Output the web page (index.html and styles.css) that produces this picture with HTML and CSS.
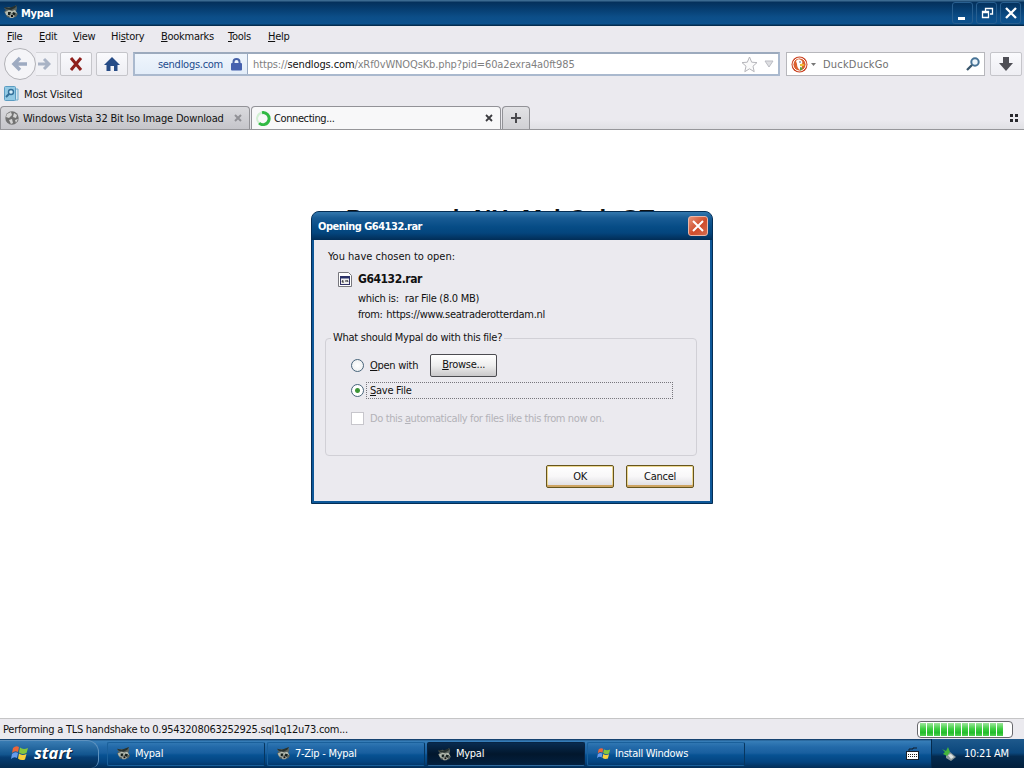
FILE: index.html
```html
<!DOCTYPE html>
<html lang="en">

<head>
    <meta charset="UTF-8">
    <meta name="viewport" content="width=device-width, initial-scale=1.0">
    <title>Mypal</title>
    <link rel="stylesheet" href="styles.css">
</head>

<body>
    <!-- shared icons -->
    <svg class="defs" width="0" height="0">
        <symbol id="mypal" viewBox="0 0 16 16">
            <path d="M1 4L6 3L9 4L13 1L14 4L13 8L15 10L13 13L8 14L4 13L3 10L1 8L3 6Z" fill="#59615c" />
            <path d="M1 3L6 4L9 3L14 1L12 4L8 6L3 5Z" fill="#26312f" />
            <path d="M2 8L6 6L9 7L12 6L14 9L11 11L9 9L6 12L3 11Z" fill="#b4bbb0" />
            <path d="M5 8h3l-1 3H5zM10 8l3 1l-2 3l-2-1z" fill="#15201e" />
            <path d="M6 12l3-2l3 2l-2 2H7z" fill="#a7aca3" />
            <path d="M8 11h2v2H8z" fill="#111" />
        </symbol>
        <symbol id="flag" viewBox="0 0 18 18">
            <path d="M2 4Q5 1 8 3L7 8Q4 6 1 9Z" fill="#ed6639" />
            <path d="M9 3.5Q12 6 17 4L15.500 9Q11 11 8 8.5Z" fill="#86c63f" />
            <path d="M1 10Q4 7 7 9L6 14Q3 12 0 15Z" fill="#679bec" />
            <path d="M8 9.5Q11 12 15.500 10L14 15.500Q10 17 7 14.500Z" fill="#f9cf3c" />
        </symbol>
    </svg>

    <div class="titlebar">
        <svg class="app-icon" width="16" height="16"><use href="#mypal" /></svg>
        <span class="title">Mypal</span>
        <div class="win-buttons">
            <span class="win-btn"><svg width="20" height="20"><path d="M5 14h7v3H5z" fill="#fff" /></svg></span>
            <span class="win-btn"><svg width="20" height="20"><path d="M8.500 8V5.500h7V11H13M5.500 8.500h6v6h-6zM5.500 9.500h6" fill="none" stroke="#fff" stroke-width="1.300" /></svg></span>
            <span class="win-btn"><svg width="20" height="20"><path d="M5 5L15 15M15 5L5 15" stroke="#fff" stroke-width="2.300" /></svg></span>
        </div>
    </div>

    <div class="menubar">
        <span class="m-file"><u>F</u>ile</span>
        <span class="m-edit"><u>E</u>dit</span>
        <span class="m-view"><u>V</u>iew</span>
        <span class="m-history">Hi<u>s</u>tory</span>
        <span class="m-bookmarks"><u>B</u>ookmarks</span>
        <span class="m-tools"><u>T</u>ools</span>
        <span><u>H</u>elp</span>
    </div>

    <div class="navbar">
        <div class="back"><svg width="18" height="16"><path d="M9 2L3 8L9 14M4 8H16" fill="none" stroke="#9eabc1" stroke-width="3.500" /></svg></div>
        <div class="forward"><svg width="14" height="14"><path d="M7 2L12 7L7 12M1 7H11" fill="none" stroke="#a9b3c5" stroke-width="3" /></svg></div>
        <div class="tool stop"><svg width="14" height="14"><path d="M2 1L12 13M12 1L2 13" stroke="#8f1f1c" stroke-width="3" /></svg></div>
        <div class="tool home"><svg width="16" height="14"><path d="M8 0L16 8H13.500V14H10V9H6.500V14H2.500V8H0Z" fill="#264b86" /></svg></div>
        <div class="urlbar">
            <div class="identity">
                <span>sendlogs.com</span>
                <svg width="11" height="13"><path d="M2.500 6V4A3 3 0 0 1 8.500 4V6" fill="none" stroke="#4661a8" stroke-width="2" /><rect y="5" width="11" height="7.500" rx="1" fill="#4560ae" /></svg>
            </div>
            <div class="url">https://<b>sendlogs.com</b>/xRf0vWNOQsKb.php?pid=60a2exra4a0ft985</div>
            <svg class="star" width="17" height="17"><path d="M8.500 1L10.700 6.200L16 6.600L12 10.200L13.200 15.700L8.500 12.800L3.800 15.700L5 10.200L1 6.600L6.300 6.200Z" fill="#fafafa" stroke="#b6b6bb" /></svg>
            <svg width="10" height="8"><path d="M1 1H9L5 7Z" fill="#dedfe2" stroke="#bbbcc3" /></svg>
        </div>
        <div class="search">
            <svg width="17" height="17">
                <circle cx="8.500" cy="8.500" r="8" fill="#c9401f" />
                <circle cx="8.500" cy="8.500" r="6.500" fill="#dc6030" stroke="#fff" />
                <path d="M5 5Q7 2 10 4Q12 5 11 8L11 11L9 14Q6 12 6 8Z" fill="#fff" />
                <path d="M9 8Q13 7 13.500 9Q12 11 9 10Z" fill="#efbd36" />
                <path d="M9 11L12 12L10 14.500H9Z" fill="#58a64a" />
                <circle cx="9" cy="6" r=".8" fill="#3b5279" />
            </svg>
            <svg class="drop" width="5" height="3"><path d="M0 0H5L2.500 3Z" fill="#777" /></svg>
            <span>DuckDuckGo</span>
            <svg width="14" height="14"><circle cx="9" cy="5" r="3.700" fill="#edf5fb" stroke="#477396" stroke-width="2" /><path d="M6 8L1 13" stroke="#37546b" stroke-width="2.300" /></svg>
        </div>
        <div class="tool download"><svg width="14" height="14"><path d="M4 0H10V6H14L7 14L0 6H4Z" fill="#4e4e55" /></svg></div>
    </div>

    <div class="bookmarks">
        <svg width="15" height="16"><path d="M11 3H14V14H11" fill="#d3e5f0" stroke="#6faccc" /><rect x=".5" y=".5" width="11" height="14" rx="1" fill="#92c9e4" stroke="#5b9cc2" /><circle cx="7" cy="6" r="2.500" fill="#d5eefa" stroke="#326f99" stroke-width="1.400" /><path d="M5 8L2 11" stroke="#326f99" stroke-width="2" /></svg>
        <span>Most Visited</span>
    </div>

    <div class="tabbar">
        <div class="tab tab-bg">
            <svg width="14" height="14"><circle cx="7" cy="7" r="6.700" fill="#727272" /><path d="M2 3L6 1L7 4L4 7L1 6ZM9 2L12 4L11 7L8 6ZM4 9L7 8L8 12L6 13ZM10 9L13 8L11 12Z" fill="#d5d5d5" /></svg>
            <span class="tab-title">Windows Vista 32 Bit Iso Image Download</span>
            <svg class="close" width="8" height="8"><path d="M1 1L7 7M7 1L1 7" stroke="#919196" stroke-width="2" /></svg>
        </div>
        <div class="tab tab-active">
            <svg width="15" height="15"><path d="M6 1.700A6 6 0 1 1 3 12" fill="none" stroke="#31b944" stroke-width="3" /><path d="M3 12A6 6 0 0 1 6 1.700" fill="none" stroke="#d2efd3" stroke-width="2" /></svg>
            <span class="tab-title">Connecting...</span>
            <svg class="close" width="8" height="8"><path d="M1 1L7 7M7 1L1 7" stroke="#3c3c40" stroke-width="1.800" /></svg>
        </div>
        <div class="new-tab"><svg width="10" height="10"><path d="M5 0V10M0 5H10" stroke="#48484c" stroke-width="2" /></svg></div>
        <svg class="groups" width="8" height="8"><path d="M0 0h3v3H0zM5 0h3v3H5zM0 5h3v3H0zM5 5h3v3H5z" fill="#28282c" /></svg>
    </div>

    <div class="page">
        <h1>Password: NHxMzhCaioGT</h1>
    </div>

    <div class="statusbar">
        <span>Performing a TLS handshake to 0.9543208063252925.sql1q12u73.com...</span>
        <div class="progress"><i></i><i></i><i></i><i></i><i></i><i></i><i></i><i></i><i></i><i></i><i></i><i></i></div>
    </div>

    <div class="taskbar">
        <div class="start"><svg width="18" height="18"><use href="#flag" /></svg><span>start</span></div>
        <div class="task"><svg width="15" height="15"><use href="#mypal" /></svg><span>Mypal</span></div>
        <div class="task"><svg width="15" height="15"><use href="#mypal" /></svg><span>7-Zip - Mypal</span></div>
        <div class="task current"><svg width="15" height="15"><use href="#mypal" /></svg><span>Mypal</span></div>
        <div class="task install"><svg width="14" height="15"><use href="#flag" /></svg><span>Install Windows</span></div>
        <svg class="keyboard" width="13" height="13"><path d="M3 4V2H7V1H11" fill="none" stroke="#111c2b" /><rect x=".5" y="4.500" width="12" height="8" fill="#fff" stroke="#17202c" /><path d="M2 7.500H11M2 9.500H11" stroke="#222" stroke-dasharray="1 1" /></svg>
        <div class="tray">
            <svg width="14" height="14"><path d="M4 7L8 5L14 10L9 14L4 11Z" fill="#8c999b" /><path d="M6 8L9 7L12 10L9 12Z" fill="#dce2df" /><path d="M0 2L4 4L6 0L8 5L5 9L1 7L3 5Z" fill="#43b43c" /></svg>
            <span>10:21 AM</span>
        </div>
    </div>

    <div class="dialog">
        <div class="dialog-title">
            <span>Opening G64132.rar</span>
            <div class="dialog-close"><svg width="12" height="12"><path d="M1 1L11 11M11 1L1 11" stroke="#fff" stroke-width="2" /></svg></div>
        </div>
        <div class="dialog-body">
            <p class="chosen">You have chosen to open:</p>
            <div class="file">
                <svg width="14" height="16"><path d="M.5 .5H10.500L13.500 3.500V14.500H.5Z" fill="#fff" stroke="#77777d" /><rect x="2.500" y="4.500" width="9" height="8" fill="#eee" stroke="#333366" /><path d="M2 5.500H12" stroke="#293269" stroke-width="2" /><path d="M5 8L4 10H6M8 8V10M9 8L10 10" stroke="#333" fill="none" /></svg>
                <div>
                    <b class="filename">G64132.rar</b>
                    <p class="which"><span>which is:</span>rar File (8.0 MB)</p>
                    <p class="from"><span>from:</span>https://www.seatraderotterdam.nl</p>
                </div>
            </div>
            <fieldset>
                <legend>What should Mypal do with this file?</legend>
                <div class="option open"><i class="radio"></i><span><u>O</u>pen with</span><button class="browse"><u>B</u>rowse...</button></div>
                <div class="option save"><i class="radio checked"></i><span class="focus"><u>S</u>ave File</span></div>
                <div class="option auto"><i class="checkbox"></i><span>Do this <u>a</u>utomatically for files like this from now on.</span></div>
            </fieldset>
            <div class="actions"><button>OK</button><button>Cancel</button></div>
        </div>
    </div>
</body>

</html>
```
FILE: styles.css
```css
* {
    box-sizing: border-box;
}

body {
    margin: 0;
    width: 1024px;
    height: 768px;
    overflow: hidden;
    display: flex;
    flex-direction: column;
    background: #fff;
    color: #111;
    font: 11px/14px "DejaVu Sans Condensed", "DejaVu Sans", sans-serif;
    letter-spacing: -0.27px;
    white-space: nowrap;
}

p {
    margin: 0;
}

svg {
    flex: none;
    display: block;
}

u {
    text-underline-offset: 1px;
}

.defs {
    position: absolute;
}

.titlebar {
    height: 26px;
    flex: none;
    display: flex;
    align-items: center;
    padding: 0 3px;
    color: #fff;
    background: linear-gradient(#3b6a91 0, #3b6a91 1px, #04305b 2px, #063d70 9px, #0c4e88 17px, #0c528e 24px, #032d50 25px);
}

.app-icon {
    margin-top: -2px;
}

.title {
    font-weight: bold;
    margin-left: 2px;
    padding-top: 1px;
    flex: 1;
}

.win-buttons {
    display: flex;
    gap: 3px;
}

.win-btn {
    width: 21px;
    height: 22px;
    border: 1px solid #285f90;
    border-radius: 3px;
}

.menubar {
    height: 20px;
    flex: none;
    display: flex;
    align-items: center;
    padding: 2px 0 0 7px;
    background: #ebeaef;
}

.menubar span {
    flex: none;
}

.m-file {
    width: 32px;
}

.m-edit {
    width: 34px;
}

.m-view {
    width: 38px;
}

.m-history {
    width: 50px;
}

.m-bookmarks {
    width: 67px;
}

.m-tools {
    width: 40px;
}

.navbar {
    height: 36px;
    flex: none;
    display: flex;
    align-items: center;
    padding: 0 2px 0 4px;
    background: #ebeaef;
}

.back {
    width: 32px;
    height: 32px;
    border: 1px solid #b2b2b7;
    border-radius: 50%;
    background: #f5f5f8;
    display: flex;
    align-items: center;
    justify-content: center;
    flex: none;
}

.forward {
    width: 22px;
    height: 24px;
    border: 1px solid #d4d4d8;
    border-left: 0;
    border-radius: 0 2px 2px 0;
    background: #f1f1f5;
    display: flex;
    align-items: center;
    padding-left: 1px;
}

.tool {
    width: 32px;
    height: 24px;
    border: 1px solid #c5c5ca;
    border-radius: 2px;
    background: linear-gradient(#fafafd, #eeeef3);
    display: flex;
    align-items: center;
    justify-content: center;
    flex: none;
}

.stop {
    margin-left: 2px;
}

.home {
    margin-left: 4px;
}

.urlbar {
    width: 647px;
    height: 24px;
    margin-left: 5px;
    display: flex;
    align-items: center;
    border: 2px solid #aab9ce;
    border-top-color: #9caabd;
    background: #fff;
    padding-right: 4px;
}

.identity {
    width: 113px;
    height: 20px;
    border-right: 1px solid #9aabc3;
    background: linear-gradient(#eff5fc, #e3edf9);
    color: #1e4b8d;
    display: flex;
    align-items: center;
    justify-content: flex-end;
    gap: 8px;
    padding-right: 5px;
}

.identity span {
    padding-top: 2px;
}

.url {
    flex: 1;
    margin-left: 5px;
    padding-top: 2px;
    color: #7f7f7f;
    letter-spacing: -0.12px;
}

.url b {
    font-weight: normal;
    color: #111;
}

.star {
    margin-right: 6px;
}

.search {
    width: 199px;
    height: 24px;
    margin-left: 6px;
    border: 1px solid #b7b7bc;
    background: #fff;
    display: flex;
    align-items: center;
    padding: 0 4px;
}

.drop {
    margin: 0 7px 0 3px;
}

.search span {
    flex: 1;
    padding-top: 2px;
    color: #707070;
    letter-spacing: 0.2px;
}

.download {
    margin-left: 5px;
}

.bookmarks {
    height: 24px;
    flex: none;
    display: flex;
    align-items: center;
    padding-left: 4px;
    gap: 5px;
    background: #ebeaef;
}

.bookmarks span {
    padding-top: 2px;
    letter-spacing: -0.15px;
}

.tabbar {
    height: 24px;
    flex: none;
    display: flex;
    align-items: flex-end;
    background: linear-gradient(#ebeaef 60%, #e0e0e4);
    border-bottom: 1px solid #96969a;
}

.tab {
    height: 23px;
    border: 1px solid #929297;
    border-bottom: 0;
    border-radius: 4px 4px 0 0;
    display: flex;
    align-items: center;
    padding: 0 7px 0 4px;
}

.tab-bg {
    width: 250px;
    background: linear-gradient(#dadade, #c5c5ca);
}

.tab-active {
    width: 250px;
    margin-left: 1px;
    background: #f8f8f9;
}

.tab-title {
    flex: 1;
    margin-left: 4px;
    padding-top: 2px;
    letter-spacing: -0.18px;
}

.tab-active .tab-title {
    margin-left: 3px;
    letter-spacing: -0.4px;
}

.new-tab {
    width: 28px;
    height: 23px;
    margin-left: 1px;
    border: 1px solid #929297;
    border-bottom: 0;
    border-radius: 4px 4px 0 0;
    background: linear-gradient(#e2e2e5, #d0d0d4);
    display: flex;
    align-items: center;
    justify-content: center;
}

.groups {
    margin: 0 6px 7px auto;
}

.page {
    height: 588px;
    flex: none;
}

.page h1 {
    margin: 75px 0 0 346px;
    font: bold 24px/28px "Liberation Sans", sans-serif;
    letter-spacing: 0;
    color: #111;
}

.statusbar {
    height: 21px;
    flex: none;
    display: flex;
    align-items: center;
    justify-content: space-between;
    padding: 0 11px 0 3px;
    border-top: 1px solid #c5c5c6;
    background: #ebeaef;
}

.statusbar span {
    padding-top: 1px;
}

.progress {
    width: 96px;
    height: 17px;
    border: 1px solid #67676c;
    border-radius: 4px;
    background: #fff;
    padding: 1px 2px;
    display: flex;
    gap: 1px;
}

.progress i {
    width: 6px;
    background: linear-gradient(#9ee69d, #3cce40 45%, #22bc2c 75%, #51d250);
}

.taskbar {
    height: 29px;
    flex: none;
    display: flex;
    align-items: center;
    color: #fff;
    background: linear-gradient(#0a2e58 0, #377eb8 2px, #236aa9 8px, #195f9f 14px, #075293 16px, #044480 23px, #032d56);
}

.start {
    width: 99px;
    height: 28px;
    display: flex;
    align-items: center;
    padding: 0 0 2px 11px;
    gap: 5px;
    border: 1px solid #5d91be;
    border-width: 1px 1px 0 0;
    border-radius: 0 12px 8px 0;
    background: linear-gradient(#397cb3, #12558e 50%, #063e74 60%, #042b50);
    font: italic bold 16.5px/20px "Open Sans", sans-serif;
    text-shadow: 1px 1px #05203a;
    letter-spacing: 0;
    margin-right: 8px;
}

.task {
    width: 158px;
    height: 24px;
    margin-right: 2px;
    padding-left: 8px;
    display: flex;
    align-items: center;
    gap: 4px;
    border: 1px solid #1a609b;
    border-right-color: #07365f;
    border-radius: 2px;
}

.task.current {
    padding: 1px 0 0 9px;
    background: linear-gradient(#082b4f, #02172d 50%, #03203f);
    border: 1px solid #072443;
    border-bottom-color: #316b9d;
}

.task.install {
    padding-left: 9px;
}

.keyboard {
    margin-left: auto;
    margin-right: 12px;
}

.tray {
    width: 93px;
    height: 29px;
    display: flex;
    align-items: center;
    padding-left: 10px;
    gap: 8px;
    border-left: 1px solid #042a4d;
    background: linear-gradient(#1e598c, #0b477c 48%, #042b50 60%, #021f3c);
}

/* download dialog, over the page */
.dialog {
    position: absolute;
    left: 311px;
    top: 211px;
    width: 402px;
    height: 293px;
    border: 1px solid #052e55;
    border-radius: 8px 8px 0 0;
    background: #0d5798;
    padding: 0 2px 2px;
}

.dialog-title {
    height: 28px;
    display: flex;
    align-items: center;
    justify-content: space-between;
    margin: 0 -2px;
    padding: 1px 4px 0 6px;
    border-radius: 7px 7px 0 0;
    background: linear-gradient(#3478ae 0, #185b94 6px, #064c86 15px, #04457d 21px, #022d56);
    color: #fff;
    font-weight: bold;
}

.dialog-title span {
    padding-top: 1px;
    letter-spacing: -0.5px;
}

.dialog-close {
    width: 20px;
    height: 20px;
    margin-top: -1px;
    border: 1px solid #eab7a9;
    border-radius: 3px;
    background: linear-gradient(135deg, #e79276, #cf4c2b 55%, #d46c4f);
    display: flex;
    align-items: center;
    justify-content: center;
}

.dialog-body {
    height: 261px;
    padding: 10px 13px 0 11px;
    background: #ebeaef;
}

.chosen {
    padding-left: 3px;
    letter-spacing: 0;
}

.file {
    display: flex;
    padding-left: 13px;
    margin-top: 8px;
    gap: 6px;
}

.filename {
    display: block;
    font-size: 12px;
    letter-spacing: -0.45px;
    margin-bottom: 6px;
}

.which {
    margin-bottom: 2px;
}

.which span {
    margin-right: 6px;
}

.from span {
    margin-right: 4px;
    letter-spacing: -0.4px;
}

fieldset {
    margin: 9px 0 0;
    padding: 0;
    height: 125px;
    border: 1px solid #d1d0d6;
    border-radius: 4px;
}

legend {
    margin-left: 5px;
    padding: 0 2px;
}

.option {
    display: flex;
    align-items: center;
    padding-left: 25px;
    height: 22px;
}

.open {
    margin-top: 9px;
}

.open span {
    padding-top: 2px;
}

.save {
    margin-top: 3px;
}

.auto {
    margin-top: 6px;
    color: #b3b2b8;
    letter-spacing: -0.39px;
}

.auto span {
    padding-top: 1px;
}

.radio,
.checkbox {
    width: 13px;
    height: 13px;
    margin-right: 6px;
    border: 1px solid #47647a;
    border-radius: 50%;
    background: radial-gradient(#fff, #e8ebec);
}

.checked {
    background: radial-gradient(circle, #36932f 0, #43983c 2px, #fff 3px);
}

.checkbox {
    border-color: #c7c6cc;
    border-radius: 0;
    background: #fff;
}

button {
    width: 68px;
    height: 23px;
    padding: 0;
    font: inherit;
    letter-spacing: inherit;
    color: #111;
    border: 1px solid #66551d;
    border-radius: 2px;
    background: linear-gradient(#fff, #f8f7f8 50%, #dcdbe0);
    box-shadow: inset 0 -2px #cda462, inset 0 0 0 1px #ecd792;
}

.browse {
    width: 67px;
    margin-left: 12px;
    border-color: #4b4b50;
    background: linear-gradient(#fff, #eee 50%, #c9c8ca);
    box-shadow: none;
}

.focus {
    width: 307px;
    height: 17px;
    margin-left: -4px;
    padding-left: 3px;
    line-height: 16px;
    border: 1px dotted #77767c;
}

.actions {
    display: flex;
    justify-content: flex-end;
    gap: 12px;
    margin-top: 9px;
    padding-right: 3px;
}
```
